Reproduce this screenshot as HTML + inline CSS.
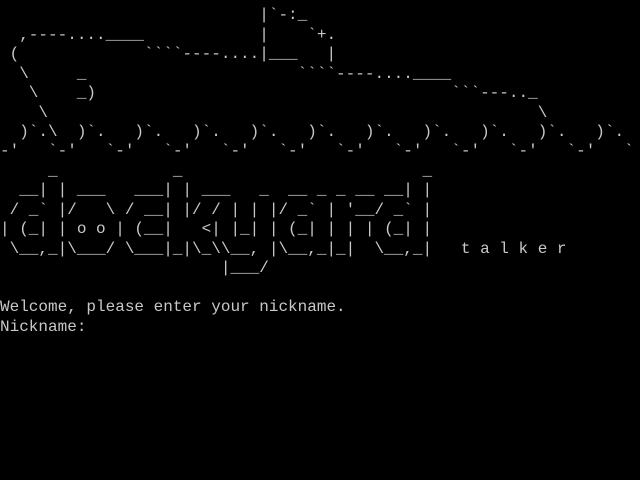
<!DOCTYPE html>
<html><head><meta charset="utf-8"><style>
html,body{margin:0;padding:0;background:#000;width:640px;height:480px;overflow:hidden}
pre{margin:0;position:absolute;left:0;top:6.3px;font-family:"Liberation Mono",monospace;font-size:16px;line-height:19.45px;color:#c8c8c8;white-space:pre}
</style></head><body>
<pre>                           |&#96;-:_
  ,----....____            |    &#96;+.
 (             &#96;&#96;&#96;&#96;----....|___   |
  \     _                      &#96;&#96;&#96;&#96;----....____
   \    _)                                     &#96;&#96;&#96;---.._
    \                                                   \
  )&#96;.\  )&#96;.   )&#96;.   )&#96;.   )&#96;.   )&#96;.   )&#96;.   )&#96;.   )&#96;.   )&#96;.   )&#96;.
-'   &#96;-'   &#96;-'   &#96;-'   &#96;-'   &#96;-'   &#96;-'   &#96;-'   &#96;-'   &#96;-'   &#96;-'   &#96;
     _            _                         _
  __| | ___   ___| | ___   _  __ _ _ __ __| |
 / _&#96; |/   \ / __| |/ / | | |/ _&#96; | '__/ _&#96; |
| (_| | o o | (__|   &lt;| |_| | (_| | | | (_| |
 \__,_|\___/ \___|_|\_\\__, |\__,_|_|  \__,_|   t a l k e r
                       |___/

Welcome, please enter your nickname.
Nickname:</pre>
</body></html>
